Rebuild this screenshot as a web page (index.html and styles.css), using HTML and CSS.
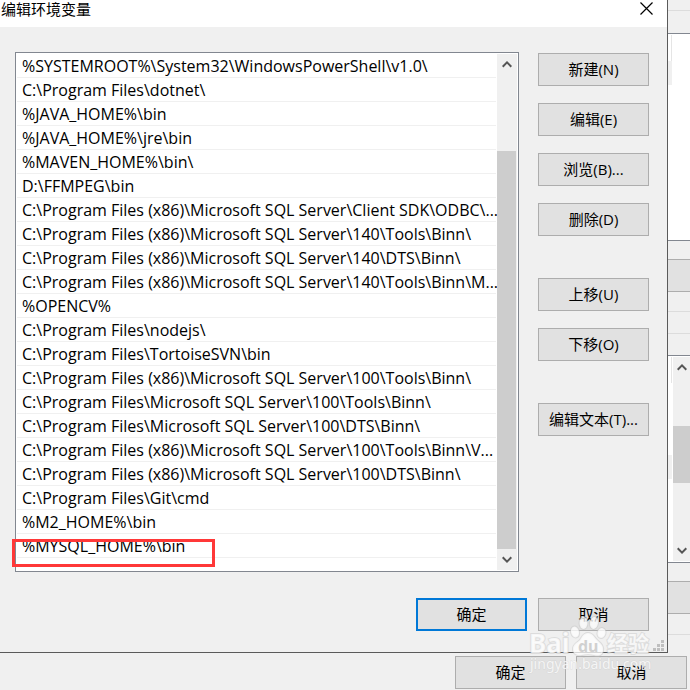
FILE: index.html
```html
<!DOCTYPE html>
<html lang="zh-CN">
<head>
<meta charset="utf-8">
<title>编辑环境变量</title>
<link rel="stylesheet" href="styles.css">
</head>
<body>
<div class="desktop">
  <main class="dialog">
    <header class="titlebar">
      <h1 class="title">编辑环境变量</h1>
      <button class="close" aria-label="关闭"><svg width="13" height="13" viewBox="0 0 13 13"><path d="M.5 .5l12 12M12.500 .5l-12 12" stroke="#000" stroke-width="1.200" fill="none"/></svg></button>
    </header>
    <div class="content">
      <div class="listbox">
        <ul class="paths">
          <li>%SYSTEMROOT%\System32\WindowsPowerShell\v1.0\</li>
          <li>C:\Program Files\dotnet\</li>
          <li>%JAVA_HOME%\bin</li>
          <li>%JAVA_HOME%\jre\bin</li>
          <li>%MAVEN_HOME%\bin\</li>
          <li>D:\FFMPEG\bin</li>
          <li>C:\Program Files (x86)\Microsoft SQL Server\Client SDK\ODBC\...</li>
          <li>C:\Program Files (x86)\Microsoft SQL Server\140\Tools\Binn\</li>
          <li>C:\Program Files (x86)\Microsoft SQL Server\140\DTS\Binn\</li>
          <li>C:\Program Files (x86)\Microsoft SQL Server\140\Tools\Binn\M...</li>
          <li>%OPENCV%</li>
          <li>C:\Program Files\nodejs\</li>
          <li>C:\Program Files\TortoiseSVN\bin</li>
          <li>C:\Program Files (x86)\Microsoft SQL Server\100\Tools\Binn\</li>
          <li>C:\Program Files\Microsoft SQL Server\100\Tools\Binn\</li>
          <li>C:\Program Files\Microsoft SQL Server\100\DTS\Binn\</li>
          <li>C:\Program Files (x86)\Microsoft SQL Server\100\Tools\Binn\V...</li>
          <li>C:\Program Files (x86)\Microsoft SQL Server\100\DTS\Binn\</li>
          <li>C:\Program Files\Git\cmd</li>
          <li>%M2_HOME%\bin</li>
          <li class="marked">%MYSQL_HOME%\bin<span class="marker"></span></li>
        </ul>
        <div class="scrollbar">
          <button class="arrow" aria-label="向上滚动"><svg width="10" height="7" viewBox="0 0 10 7"><path d="M.7 5.700L5 1.400l4.300 4.300" stroke="#555" stroke-width="2" fill="none"/></svg></button>
          <div class="track"><div class="thumb"></div></div>
          <button class="arrow" aria-label="向下滚动"><svg width="10" height="7" viewBox="0 0 10 7"><path d="M.7 1.300L5 5.600l4.300-4.300" stroke="#555" stroke-width="2" fill="none"/></svg></button>
        </div>
      </div>
      <div class="actions">
        <div class="group"><button class="btn">新建(N)</button><button class="btn">编辑(E)</button><button class="btn">浏览(B)...</button><button class="btn">删除(D)</button></div>
        <div class="group"><button class="btn">上移(U)</button><button class="btn">下移(O)</button></div>
        <div class="group"><button class="btn">编辑文本(T)...</button></div>
      </div>
    </div>
    <footer class="confirm">
      <button class="btn primary">确定</button>
      <button class="btn">取消</button>
    </footer>
    <svg class="grip" width="11" height="11" viewBox="0 0 11 11" fill="#bfbfbf"><path d="M8 0h3v3H8zM4 4h3v3H4zM8 4h3v3H8zM0 8h3v3H0zM4 8h3v3H4zM8 8h3v3H8z"/></svg>
  </main>
  <aside class="parent">
    <div class="frame"></div>
    <div class="gap"></div>
    <div class="table"><div class="column"><div class="head"></div><div class="selected"></div></div></div>
    <div class="space"></div>
    <div class="stub"></div>
    <div class="frame rule"></div>
    <div class="gap rule"></div>
    <div class="table">
      <div class="column lower"><div class="head"></div><div class="selected"></div></div>
      <div class="scrollbar side">
        <button class="arrow" aria-label="向上滚动"><svg width="10" height="7" viewBox="0 0 10 7"><path d="M.7 5.700L5 1.400l4.300 4.300" stroke="#555" stroke-width="2" fill="none"/></svg></button>
        <div class="track"><div class="thumb"></div></div>
        <button class="arrow" aria-label="向下滚动"><svg width="10" height="7" viewBox="0 0 10 7"><path d="M.7 1.300L5 5.600l4.300-4.300" stroke="#555" stroke-width="2" fill="none"/></svg></button>
      </div>
    </div>
    <div class="space"></div>
    <div class="stub"></div>
    <div class="gap end"></div>
  </aside>
  <footer class="parent-footer">
    <button class="btn">确定</button>
    <button class="btn">取消</button>
  </footer>
  <svg class="watermark" width="126" height="60" viewBox="0 0 126 60">
    <g class="logo">
      <text x="1" y="38" class="latin">Bai</text>
      <g>
        <ellipse cx="47" cy="17" rx="4" ry="5.500" transform="rotate(-15 47 17)"/>
        <ellipse cx="55.500" cy="8" rx="4" ry="6"/>
        <ellipse cx="66" cy="8" rx="4" ry="6" transform="rotate(8 66 8)"/>
        <ellipse cx="73.500" cy="18" rx="4" ry="5" transform="rotate(15 73.500 18)"/>
        <path d="M60 18c5 0 6 4 9 7 3 3 7 5 6 11-1 5-5 5-9 4-4-1-8-1-12 0-5 1-9-1-9-6 0-5 4-6 7-9 2-3 3-7 8-7z"/>
      </g>
      <text x="79" y="36" class="cjk">经验</text>
    </g>
    <text x="50" y="37" class="du">du</text>
    <text x="2" y="54" class="site">jingyan.baidu.com</text>
  </svg>
</div>
</body>
</html>
```
FILE: styles.css
```css
* { box-sizing: border-box; }

body {
  margin: 0;
  background: #f0f0f0;
  color: #000;
  font: 15px/24px "Open Sans", "Noto Sans CJK SC", sans-serif;
}

button { font: inherit; color: inherit; padding: 0; }

.desktop {
  position: relative;
  display: grid;
  grid-template-columns: minmax(0, 1fr) 22px;
  min-height: 100vh;
  align-content: start;
  overflow: hidden;
}

.dialog {
  position: relative;
  border: solid #5a5a5a;
  border-width: 0 1px 1px 0;
  padding-bottom: 21px;
}

.titlebar {
  display: flex;
  justify-content: space-between;
  align-items: flex-start;
  height: 27px;
  padding: 0 14px 0 1px;
  background: #fff;
}

.title { margin: 0; font-size: 15px; font-weight: 400; line-height: 18px; }
.close { display: flex; margin-top: 2px; border: 0; background: none; }

.content {
  display: flex;
  gap: 19px;
  padding: 25px 18px 26px 15px;
}

.listbox {
  flex: 1;
  min-width: 0;
  display: flex;
  gap: 1px;
  padding: 1px;
  border: 1px solid #828790;
  background: #fff;
}

.paths {
  flex: 1;
  min-width: 0;
  margin: 0;
  padding: 0 0 12px;
  list-style: none;
  font-size: 16px;
}

.paths li {
  height: 24px;
  padding-left: 5px;
  border-bottom: 1px solid #f0f0f0;
  line-height: 25px;
  white-space: nowrap;
}

.marked { position: relative; }

.marker {
  position: absolute;
  left: -5px;
  top: 5px;
  width: 203px;
  height: 28px;
  border: 3px solid #ff3838;
}

.scrollbar {
  flex-shrink: 0;
  display: flex;
  flex-direction: column;
  width: 20px;
  background: #f0f0f0;
}

.arrow {
  display: flex;
  align-items: center;
  justify-content: center;
  height: 21px;
  border: 0;
  background: none;
}

.track {
  flex: 1;
  display: flex;
  flex-direction: column;
  justify-content: flex-end;
}

.thumb { width: 19px; height: 84%; background: #cdcdcd; }

.actions {
  flex-shrink: 0;
  display: flex;
  flex-direction: column;
  gap: 42px;
  width: 111px;
  padding-top: 1px;
}

.group { display: flex; flex-direction: column; gap: 17px; }

.btn {
  width: 111px;
  height: 33px;
  padding-bottom: 2px;
  border: 1px solid #adadad;
  background: #e1e1e1;
  text-align: center;
}

.primary { border: 2px solid #0078d7; }

.confirm {
  display: flex;
  justify-content: flex-end;
  gap: 11px;
  padding-right: 18px;
}

.grip { position: absolute; right: 3px; bottom: 1px; }

.parent { display: flex; flex-direction: column; height: 0; }
.frame { height: 11px; border-bottom: 1px solid #dcdcdc; }
.gap { height: 22px; }
.rule { height: 20px; border-bottom: 1px solid #dcdcdc; }
.gap.rule { height: 22px; }
.gap.end { height: 21px; border-bottom: 1px solid #dcdcdc; }

.parent > * { flex-shrink: 0; }

.table {
  display: flex;
  gap: 1px;
  height: 208px;
  padding: 1px 0;
  border: solid #828790;
  border-width: 1px 0;
  background: #fff;
}

.gap.rule + .table { margin-top: 21px; }

.column { width: 4px; }
.head { height: 26px; border-right: 1px solid #e5e5e5; }
.selected { height: 24px; background: #f0f0f0; }
.lower .selected { margin-top: 72px; }
.space { height: 18px; }
.stub { height: 33px; border: solid #adadad; border-width: 1px 0; background: #e1e1e1; }

.side { flex: 1; }
.side .thumb { width: 100%; height: 57px; }
.side .track { justify-content: flex-start; padding-top: 48px; }
.side .arrow { padding-left: 1px; }

.parent-footer {
  grid-column: 1 / -1;
  display: flex;
  justify-content: flex-end;
  gap: 10px;
  padding: 3px 3px 1px;
}

.watermark { position: absolute; right: 36px; bottom: 15px; pointer-events: none; }
.logo { fill: #fff; fill-opacity: .75; stroke: #c8c8c8; stroke-opacity: .5; paint-order: stroke; stroke-width: 2px; }
.latin { font: bold 26px "Noto Sans", sans-serif; }
.cjk { font: bold 21px "Noto Sans CJK SC", sans-serif; }
.du { font: bold 16px "Noto Sans", sans-serif; fill: #d0d0d0; }
.site { font: 14px "Noto Sans", sans-serif; fill: #fff; fill-opacity: .75; stroke: #c8c8c8; stroke-opacity: .4; paint-order: stroke; }
```
